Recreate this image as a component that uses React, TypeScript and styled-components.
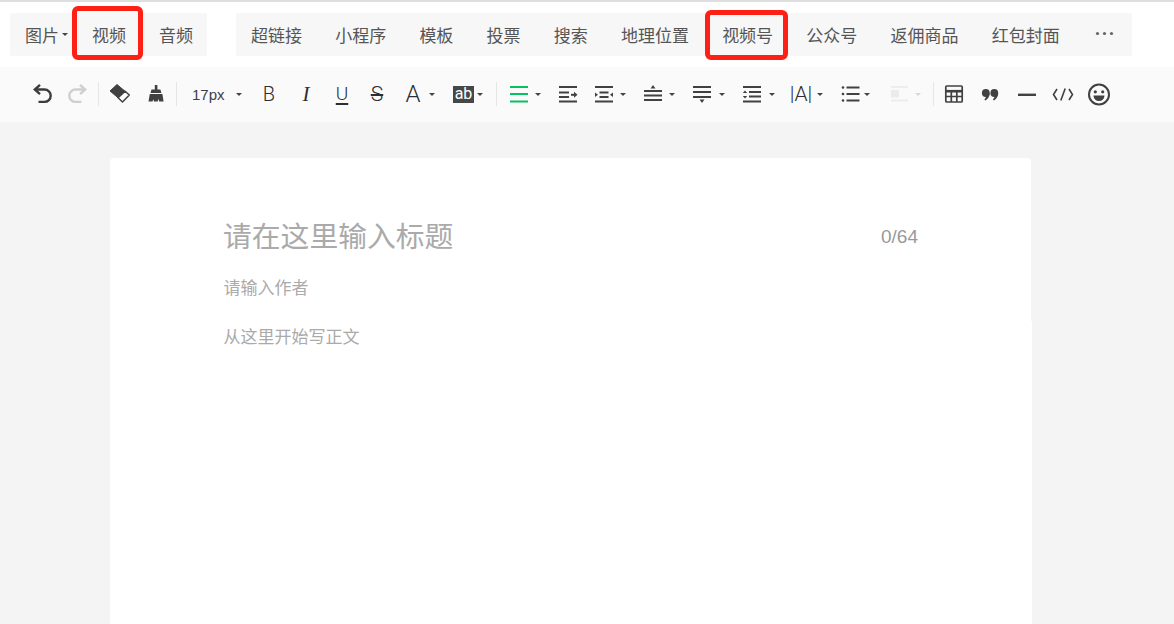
import React from 'react';
import styled, { createGlobalStyle } from 'styled-components';

const Global = createGlobalStyle`
  html, body { margin: 0; padding: 0; height: 100%; overflow: hidden; background: #f4f4f4; }
  body { font-family: "Noto Sans CJK SC", "Liberation Sans", sans-serif; }
`;

const Page = styled.div`
  width: 1174px;
  height: 624px;
  overflow: hidden;
  display: flex;
  flex-direction: column;
  background: #f4f4f4;
`;

const TabBar = styled.div`
  height: 67px;
  box-sizing: border-box;
  flex: none;
  border-top: 2px solid #dedede;
  background: #fff;
  display: flex;
  align-items: flex-start;
  padding: 11px 0 0 10px;
  gap: 29px;
`;

const TabGroup = styled.div`
  height: 43px;
  background: #f7f7f7;
  border-radius: 2px;
  display: flex;
  align-items: center;
  gap: ${p => p.$gap}px;
  padding: 0 ${p => p.$right}px 0 15px;
`;

const Tab = styled.div`
  position: relative;
  font-size: 17px;
  line-height: 24px;
  color: #555;
  white-space: nowrap;
  display: flex;
  align-items: center;
`;

const TabCaret = styled.i`
  width: 0;
  height: 0;
  border-left: 3px solid transparent;
  border-right: 3px solid transparent;
  border-top: 3.5px solid #444;
  margin: 0 -9px 0 3px;
`;

const Callout = styled.span`
  position: absolute;
  top: ${p => p.$top}px;
  bottom: -13px;
  left: ${p => p.$left}px;
  right: ${p => p.$right}px;
  border: 5px solid #ff2015;
  border-radius: 6px;
`;

const More = styled.svg`
  width: 19px;
  height: 5px;
  display: block;
  margin: -2px 0 0 2.5px;
`;

const ToolBar = styled.div`
  height: 55px;
  box-sizing: border-box;
  flex: none;
  background: #fafafa;
  display: flex;
  align-items: center;
  padding: 0 0 1px 24px;
`;

const Tool = styled.div`
  width: ${p => p.$w || 36}px;
  height: 30px;
  flex: none;
  box-sizing: border-box;
  padding-left: 6px;
  display: flex;
  align-items: center;
  margin-left: ${p => p.$ml || 0}px;
  color: #414141;
`;

const Icon = styled.svg`
  width: 24px;
  height: 24px;
  flex: none;
  display: block;
`;

const Glyph = styled.span`
  width: 24px;
  flex: none;
  text-align: center;
  font-family: ${p => p.$serif ? '"Liberation Serif"' : 'Roboto'}, sans-serif;
  font-size: ${p => p.$size}px;
  font-weight: ${p => p.$serif ? 400 : 300};
  font-style: ${p => p.$serif ? 'italic' : 'normal'};
  line-height: 24px;
  color: #2e2e2e;
`;

const UnderGlyph = styled(Glyph)`
  text-decoration: underline;
  text-underline-offset: 3px;
  text-decoration-thickness: 1.5px;
`;

const StruckGlyph = styled(Glyph)`
  text-decoration: line-through;
  text-decoration-thickness: 1.5px;
`;

const InverseBox = styled.span`
  width: 21px;
  height: 17px;
  flex: none;
  margin-left: 2px;
  background: #474747;
  color: #fff;
  font-family: Roboto, sans-serif;
  font-size: 16px;
  line-height: 16px;
  text-align: center;
`;

const Caret = styled.i`
  width: 0;
  height: 0;
  flex: none;
  border-left: 3px solid transparent;
  border-right: 3px solid transparent;
  border-top: 3.5px solid ${p => p.$off ? '#d8d8d8' : '#444'};
  margin-left: ${p => (p.$gap || 19) - 15}px;
`;

const Sep = styled.div`
  width: 1px;
  height: 24px;
  flex: none;
  background: #e6e6e6;
  margin-left: ${p => p.$ml || 0}px;
`;

const SizeSelect = styled.div`
  width: 74px;
  flex: none;
  box-sizing: border-box;
  padding-left: 15px;
  display: flex;
  align-items: center;
  font-family: "Liberation Sans", Arial, sans-serif;
  font-size: 15px;
  color: #3a3f4a;
`;

const SizeCaret = styled(Caret)`
  margin-left: 11px;
`;

const Card = styled.div`
  margin: 36px 0 0 110px;
  width: 922px;
  flex: none;
`;

const CardHead = styled.div`
  width: 921px;
  height: 163px;
  box-sizing: border-box;
  background: #fff;
  border-radius: 4px 4px 0 0;
  padding: 57px 113px 0 114px;
`;

const TitleRow = styled.div`
  display: flex;
  align-items: center;
  justify-content: space-between;
  height: 40px;
`;

const Title = styled.div`
  font-size: 28.8px;
  line-height: 40px;
  margin-left: -1px;
  color: #aaa;
`;

const Count = styled.div`
  font-family: "Liberation Sans", Arial, sans-serif;
  font-size: 19px;
  padding-top: 4px;
  color: #999;
`;

const Author = styled.div`
  margin-top: 20px;
  font-size: 17px;
  line-height: 24px;
  margin-left: -0.5px;
  color: #aaa;
`;

const CardBody = styled.div`
  height: 320px;
  box-sizing: border-box;
  background: #fff;
  padding: 3px 0 0 113.5px;
  font-size: 17px;
  line-height: 24px;
  color: #aaa;
`;

const Lines = ({ rows, color = '#414141', w = 2 }: { rows: number[][]; color?: string; w?: number }) => (
  <>
    {rows.map(([x1, x2, y], i) => (
      <path key={i} d={`M${x1} ${y}H${x2}`} stroke={color} strokeWidth={w} fill="none" />
    ))}
  </>
);

export default function App() {
  return (
    <Page>
      <Global />
      <TabBar>
        <TabGroup $right={14} $gap={33}>
          <Tab>图片<TabCaret /></Tab>
          <Tab>视频<Callout $top={-17} $left={-20} $right={-17} /></Tab>
          <Tab>音频</Tab>
        </TabGroup>
        <TabGroup $right={17.5} $gap={33.2}>
          <Tab>超链接</Tab>
          <Tab>小程序</Tab>
          <Tab>模板</Tab>
          <Tab>投票</Tab>
          <Tab>搜索</Tab>
          <Tab>地理位置</Tab>
          <Tab>视频号<Callout $top={-13} $left={-17} $right={-15} /></Tab>
          <Tab>公众号</Tab>
          <Tab>返佣商品</Tab>
          <Tab>红包封面</Tab>
          <Tab>
            <More viewBox="0 0 19 5">
              <circle cx="2.5" cy="2.5" r="1.6" fill="#666" />
              <circle cx="9.5" cy="2.5" r="1.6" fill="#666" />
              <circle cx="16.5" cy="2.5" r="1.6" fill="#666" />
            </More>
          </Tab>
        </TabGroup>
      </TabBar>

      <ToolBar>
        <Tool>
          <Icon viewBox="0 0 24 24" fill="none" stroke="#3c3c3c" strokeWidth="2.4">
            <path d="M10 2.8L4.8 7.5L10 12.2" />
            <path d="M5 7.5H14.5a6.2 6.2 0 0 1 0 12.4H8.5" />
          </Icon>
        </Tool>
        <Tool>
          <Icon viewBox="0 0 24 24" fill="none" stroke="#cfcfcf" strokeWidth="2.4">
            <path d="M14 2.8L19.2 7.5L14 12.2" />
            <path d="M19 7.5H9.5a6.2 6.2 0 0 0 0 12.4H15.5" />
          </Icon>
        </Tool>
        <Sep $ml={2} />
        <Tool $ml={3}>
          <Icon viewBox="0 0 24 24">
            <path d="M2 9L9 2.5L17.1 9.3L10.1 15.8Z" fill="#414141" stroke="#414141" strokeLinejoin="round" />
            <path d="M10.1 15.8L17.1 9.3L21.3 13L14.5 20Z" fill="#fff" stroke="#414141" strokeWidth="1.5" strokeLinejoin="round" />
          </Icon>
        </Tool>
        <Tool>
          <Icon viewBox="0 0 24 24" fill="#414141">
            <path d="M10.8 3h2.6v4.5h3l1 3.5H6.5l1-3.5h3.3z" />
            <path d="M5.8 12h12.6l1.2 7.5h-4.4l-.7-2.8-.8 2.8H10l-.7-2.2-.8 2.2H4.5z" />
          </Icon>
        </Tool>
        <Sep $ml={2} />
        <SizeSelect>17px<SizeCaret /></SizeSelect>
        <Tool $w={37}><Glyph $size={20}>B</Glyph></Tool>
        <Tool><Glyph $size={21} $serif>I</Glyph></Tool>
        <Tool $w={35}><UnderGlyph $size={19}>U</UnderGlyph></Tool>
        <Tool><StruckGlyph $size={21}>S</StruckGlyph></Tool>
        <Tool $w={50}><Glyph $size={24}>A</Glyph><Caret /></Tool>
        <Tool $w={50}><InverseBox>ab</InverseBox><Caret $gap={17.5} /></Tool>
        <Sep $ml={1} />
        <Tool $w={49} $ml={4}>
          <Icon viewBox="0 0 24 24">
            <Lines color="#07c160" rows={[[3, 21, 5], [3, 21, 12], [3, 21, 19.5]]} />
          </Icon>
          <Caret />
        </Tool>
        <Tool>
          <Icon viewBox="0 0 24 24">
            <Lines rows={[[3, 21, 5], [3, 13, 10.5], [3, 13, 15], [3, 21, 19.5], [15, 19, 12.8]]} />
            <path d="M18 9.8L21.5 12.8L18 15.8Z" fill="#414141" />
          </Icon>
        </Tool>
        <Tool $w={49}>
          <Icon viewBox="0 0 24 24">
            <Lines rows={[[3, 21, 5], [7.5, 16.5, 10.5], [7.5, 16.5, 15], [3, 21, 19.5]]} />
            <path d="M3 10.5L6 12.8L3 15ZM21 10.5L18 12.8L21 15Z" fill="#414141" />
          </Icon>
          <Caret />
        </Tool>
        <Tool $w={49}>
          <Icon viewBox="0 0 24 24">
            <path d="M12 3L14.5 6.5H9.5Z" fill="#414141" />
            <Lines rows={[[3, 21, 9], [3, 21, 13.5], [3, 21, 18]]} />
          </Icon>
          <Caret />
        </Tool>
        <Tool $w={50}>
          <Icon viewBox="0 0 24 24">
            <Lines rows={[[3, 21, 5], [3, 21, 10], [3, 21, 15]]} />
            <path d="M12 21L9.5 17.5H14.5Z" fill="#414141" />
          </Icon>
          <Caret $gap={20} />
        </Tool>
        <Tool $w={49}>
          <Icon viewBox="0 0 24 24">
            <Lines rows={[[3, 21, 5], [9, 21, 10], [9, 21, 14.5], [3, 21, 19.5]]} />
            <path d="M5 8.5L7.2 11H2.8ZM5 16.5L7.2 14H2.8Z" fill="#414141" />
          </Icon>
          <Caret $gap={20} />
        </Tool>
        <Tool $w={50}><Glyph $size={21}>|A|</Glyph><Caret /></Tool>
        <Tool $w={49}>
          <Icon viewBox="0 0 24 24">
            <Lines rows={[[7.5, 20.5, 5.5], [7.5, 20.5, 12], [7.5, 20.5, 18.5]]} />
            <circle cx="4" cy="5.5" r="1.3" fill="#414141" />
            <circle cx="4" cy="12" r="1.3" fill="#414141" />
            <circle cx="4" cy="18.5" r="1.3" fill="#414141" />
          </Icon>
          <Caret $gap={16} />
        </Tool>
        <Tool $w={51}>
          <Icon viewBox="0 0 24 24">
            <Lines color="#ededed" rows={[[3, 20, 5], [3, 20, 18.5]]} />
            <path d="M3 8h8v7.5H3z" fill="#ebebeb" />
          </Icon>
          <Caret $off $gap={18} />
        </Tool>
        <Sep />
        <Tool $ml={2}>
          <Icon viewBox="0 0 24 24" fill="none" stroke="#414141" strokeWidth="1.7">
            <rect x="3.8" y="4" width="16.4" height="16" rx="1" />
            <path d="M3.8 9.2H20.2" strokeWidth="2.6" />
            <path d="M3.8 14.5H20.2M9.3 9.5V20M14.8 9.5V20" />
          </Icon>
        </Tool>
        <Tool $w={37}>
          <Icon viewBox="0 0 24 24" fill="#414141">
            <circle cx="7.8" cy="11" r="3.9" />
            <circle cx="16.3" cy="11" r="3.9" />
            <path d="M11.7 11c0 3.4-1.8 6-4.4 7.6l-.9-1.2c1.2-1.2 1.8-2.4 1.8-3.6ZM20.2 11c0 3.4-1.8 6-4.4 7.6l-.9-1.2c1.2-1.2 1.8-2.4 1.8-3.6Z" />
          </Icon>
        </Tool>
        <Tool>
          <Icon viewBox="0 0 24 24">
            <Lines rows={[[3, 21, 12.8]]} w={2.4} />
          </Icon>
        </Tool>
        <Tool>
          <Icon viewBox="0 0 24 24" fill="none" stroke="#414141" strokeWidth="1.6">
            <path d="M6 7L2.5 12.5L6 18" />
            <path d="M14.2 6.5L9.8 18.5" />
            <path d="M18 7L21.5 12.5L18 18" />
          </Icon>
        </Tool>
        <Tool>
          <Icon viewBox="0 0 24 24">
            <circle cx="12" cy="12.5" r="10" fill="none" stroke="#414141" strokeWidth="2" />
            <circle cx="8.3" cy="9.8" r="1.6" fill="#414141" />
            <circle cx="15.7" cy="9.8" r="1.6" fill="#414141" />
            <path d="M6.5 13.5H17.5a5.5 5.5 0 0 1-11 0Z" fill="#414141" />
          </Icon>
        </Tool>
      </ToolBar>

      <Card>
        <CardHead>
          <TitleRow>
            <Title>请在这里输入标题</Title>
            <Count>0/64</Count>
          </TitleRow>
          <Author>请输入作者</Author>
        </CardHead>
        <CardBody>从这里开始写正文</CardBody>
      </Card>
    </Page>
  );
}
